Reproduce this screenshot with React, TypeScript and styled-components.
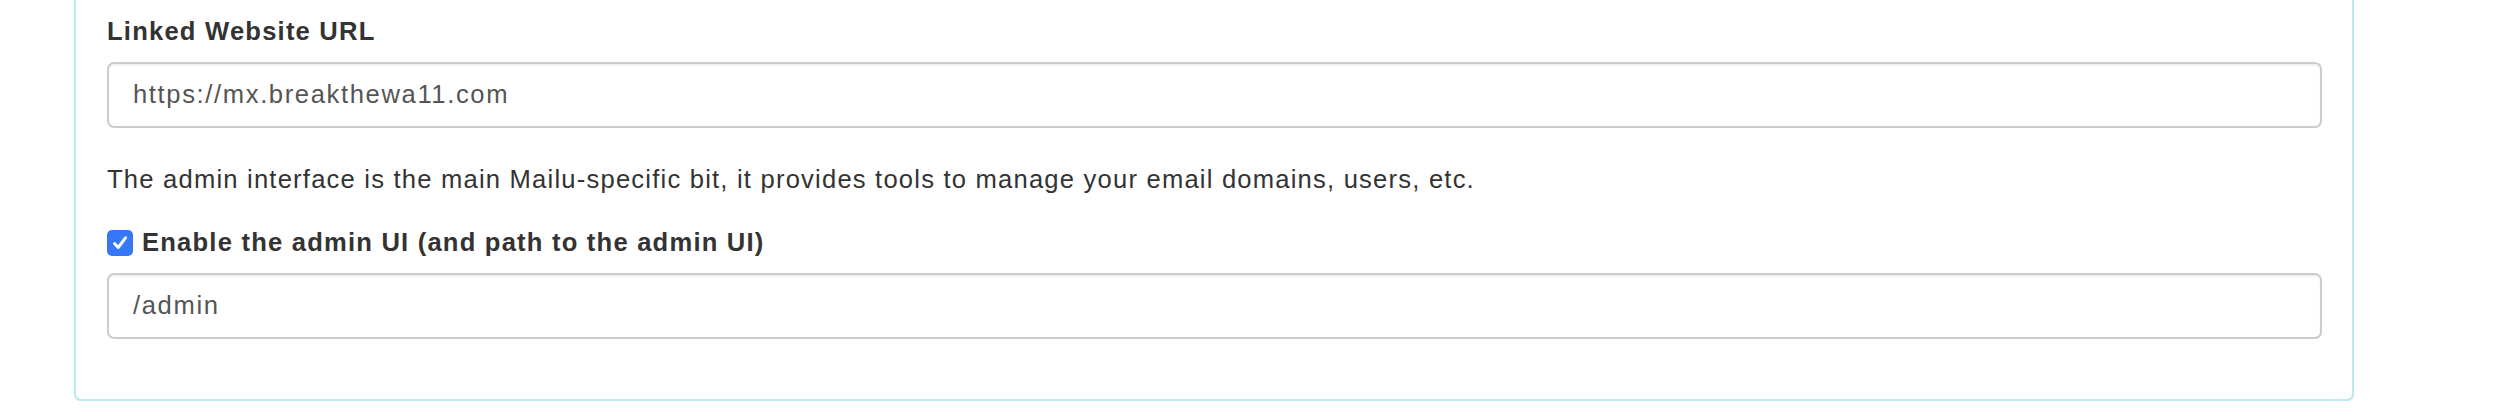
import React from "react";
import styled, { createGlobalStyle } from "styled-components";

const GlobalStyle = createGlobalStyle`
  html, body {
    margin: 0;
    padding: 0;
    background: #ffffff;
    overflow: hidden;
  }
  body {
    font-family: "Liberation Sans", Arial, Helvetica, sans-serif;
    font-size: 25.6px;
    line-height: 36.6px;
    letter-spacing: 1.2px;
    color: #333333;
  }
`;

const Panel = styled.section`
  margin: -30px 154px 0 74px;
  padding: 41px 30px 60px 31px;
  border: 2px solid #bce8f1;
  border-radius: 7px;
  background: #ffffff;
  box-shadow: 0 1px 2px rgba(0, 0, 0, 0.05);
`;

const FieldGroup = styled.div<{ $gap?: number }>`
  display: flex;
  flex-direction: column;
  margin-bottom: ${(p) => p.$gap ?? 0}px;
`;

const Label = styled.label`
  display: block;
  font-weight: 700;
  margin-bottom: 12px;
  color: #333333;
`;

const CheckLabel = styled.label`
  display: flex;
  align-items: center;
  gap: 9px;
  font-weight: 700;
  margin-bottom: 12px;
  color: #333333;
`;

const Box = styled.span`
  display: inline-flex;
  align-items: center;
  justify-content: center;
  width: 26px;
  height: 26px;
  border-radius: 5px;
  background: #3478f6;
  flex-shrink: 0;
  margin-top: 2px;
`;

const Input = styled.input`
  box-sizing: border-box;
  width: 100%;
  height: 66px;
  padding: 0 24px;
  border: 2px solid #cccccc;
  border-radius: 7px;
  font-family: "Liberation Sans", Arial, Helvetica, sans-serif;
  font-size: 25.6px;
  letter-spacing: 1.62px;
  color: #555555;
  background: #ffffff;
  box-shadow: inset 0 1.6px 1.6px rgba(0, 0, 0, 0.075);
  outline: none;
`;

const Help = styled.p`
  margin: 0 0 27px;
  color: #333333;
`;

export default function App() {
  return (
    <>
      <GlobalStyle />
      <Panel>
        <FieldGroup $gap={33}>
          <Label htmlFor="website">Linked Website URL</Label>
          <Input id="website" readOnly value="https://mx.breakthewa11.com" />
        </FieldGroup>
        <Help>
          The admin interface is the main Mailu-specific bit, it provides tools to manage your email domains, users, etc.
        </Help>
        <FieldGroup>
          <CheckLabel>
            <Box>
              <svg width="18" height="18" viewBox="0 0 18 18" fill="none">
                <path
                  d="M3.5 9.5 L7.2 13.5 L14.5 3.8"
                  stroke="#ffffff"
                  strokeWidth="3"
                  strokeLinecap="round"
                  strokeLinejoin="round"
                />
              </svg>
            </Box>
            Enable the admin UI (and path to the admin UI)
          </CheckLabel>
          <Input readOnly value="/admin" />
        </FieldGroup>
      </Panel>
    </>
  );
}
